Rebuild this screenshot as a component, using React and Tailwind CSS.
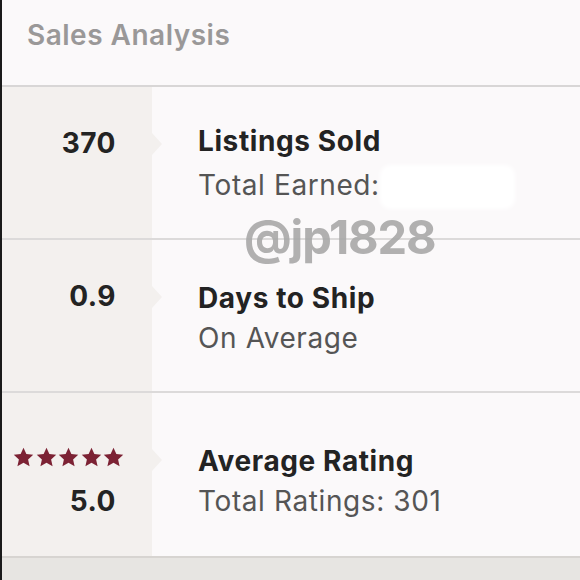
import React from "react";

function Star() {
  return (
    <svg width="21" height="20" viewBox="0 0 24 23" className="block">
      <path d="M12 0.8l3.3 7.2 7.9 0.9-5.9 5.4 1.7 7.8L12 18.1 5 22.1l1.7-7.8L0.8 8.9l7.9-0.9z" fill="#7c2234" />
    </svg>
  );
}

function Row({ height, left, title, sub, border = true, extra, offset = 0 }) {
  return (
    <div className={`flex ${border ? "border-b-2 border-[#dcdada]" : ""}`} style={{ height }}>
      <div className="relative w-[150px] shrink-0 bg-[#f3f0ee] flex flex-col items-end justify-center pr-[36px]">
        {left}
        <div className="absolute right-[-10px] top-1/2 -translate-y-1/2 w-0 h-0 border-y-[11px] border-y-transparent border-l-[10px] border-l-[#f3f0ee]" style={{ marginTop: offset - 19 }} />
      </div>
      <div className="flex-1 flex flex-col justify-center pl-[46px] relative" style={{ paddingTop: 4 + offset * 2 }}>
        <div className="text-[28px] font-bold text-[#232323] leading-[40px] tracking-[0.6px]">{title}</div>
        <div className="text-[28px] text-[#555555] leading-[40px] flex items-center tracking-[0.6px]">{sub}{extra}</div>
      </div>
    </div>
  );
}

export default function App() {
  return (
    <div className="w-[580px] h-[580px] overflow-hidden relative bg-[#fbf9fa] border-l-2 border-[#1a1a1a]" style={{ fontFamily: "Inter, 'Open Sans', sans-serif" }}>
      <div className="h-[87px] border-b-2 border-[#d8d6d6] flex items-start pt-[15px] pl-[25px]">
        <span className="text-[28px] leading-[40px] text-[#9a9898] font-semibold tracking-[0.5px]">Sales Analysis</span>
      </div>
      <div className="flex flex-col">
        <Row
          height={153}
          left={<div className="text-[28px] font-bold text-[#232323] leading-[40px] -mt-[40px] tracking-[0.5px]">370</div>}
          title="Listings Sold"
          sub="Total Earned:"
          extra={<span className="ml-0 mt-[4px] w-[135px] h-[44px] bg-white rounded-[10px] blur-[2px] inline-block" />}
        />
        <Row
          height={153}
          left={<div className="text-[28px] font-bold text-[#232323] leading-[40px] -mt-[40px] tracking-[0.5px]">0.9</div>}
          title="Days to Ship"
          sub="On Average"
        />
        <Row
          height={163}
          border={false}
          offset={4}
          left={
            <div className="flex flex-col items-end mr-[-8px] mt-[18px]">
              <div className="flex gap-[1.5px]"><Star /><Star /><Star /><Star /><Star /></div>
              <div className="text-[28px] font-bold text-[#232323] leading-[40px] mt-[14px] mr-[8px] tracking-[0.5px]">5.0</div>
            </div>
          }
          title="Average Rating"
          sub="Total Ratings: 301"
        />
      </div>
      <div className="h-[40px] bg-[#e7e5e2] border-t-2 border-[#d7d4d1]" />
      <div className="absolute left-[242px] top-[213px] text-[47px] font-bold text-[#a9a9a9] opacity-90 leading-none tracking-tight" style={{ fontFamily: "Inter, sans-serif" }}>@jp1828</div>
    </div>
  );
}
